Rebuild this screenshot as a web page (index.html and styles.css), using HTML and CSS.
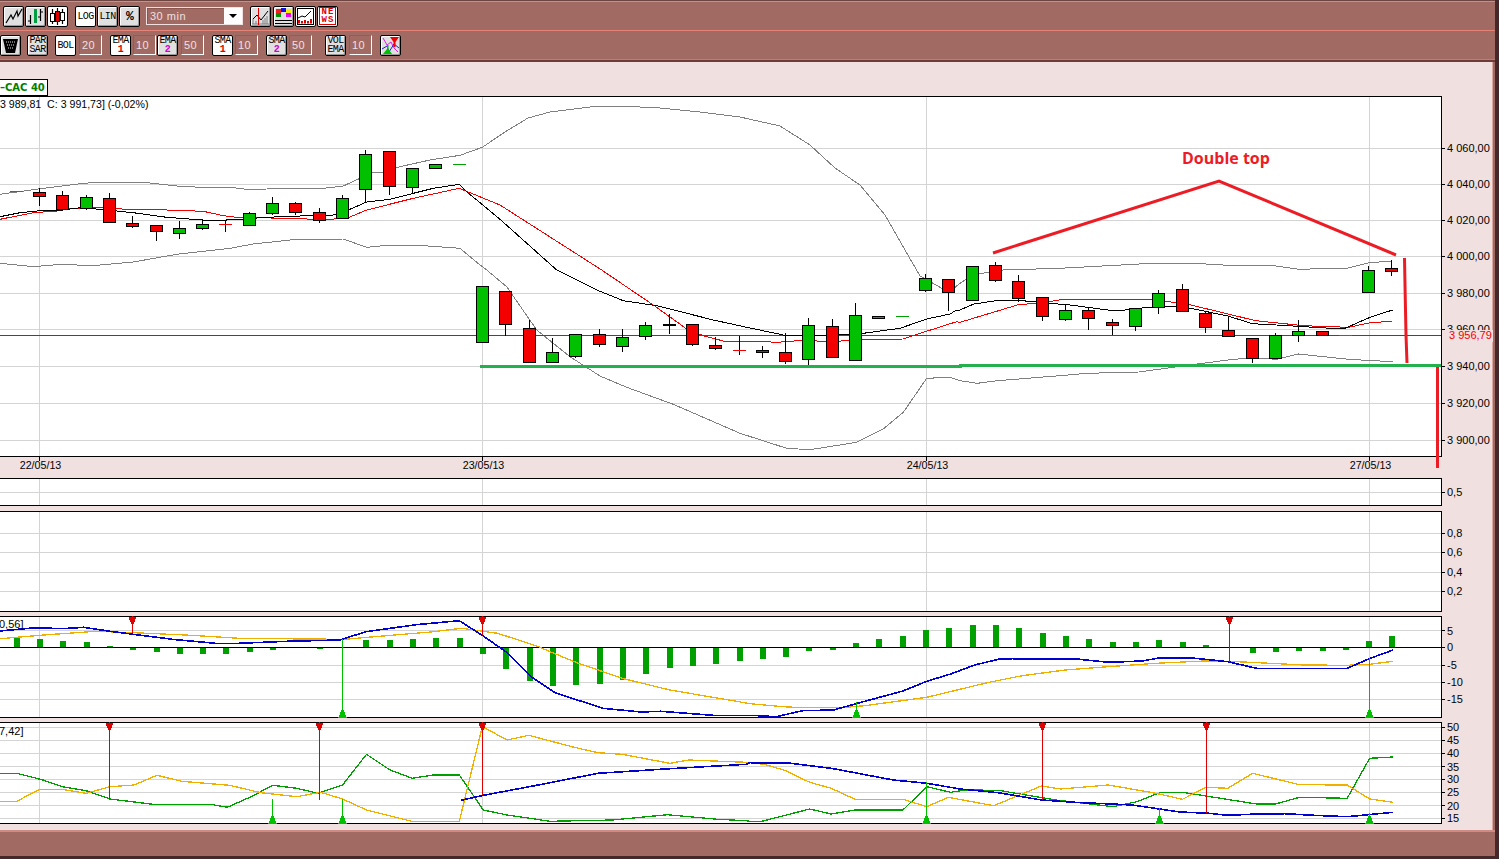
FILE: index.html
```html
<!DOCTYPE html>
<html>
	<head>
		<meta charset="utf-8">
		<title>CAC 40</title>
		<link rel="stylesheet" href="styles.css">
		<script src="chart.js"></script>
	</head>
	<body>
		<div class="app">
			<div class="topbar">
				<div class="toolrow first">
					<button class="tool ml3"><svg width="19" height="19" viewBox="0 0 19 19"><path class="ic" d="M2 16L7 8L9 12L13 4L14 9L18 2"/></svg></button>
					<button class="tool ml1"><svg width="19" height="19" viewBox="0 0 19 19"><path class="ic" d="M4.5 8V17M2 14H4.5M14.5 2V14M14.5 5H17M14.5 10H12"/><path class="ic-green" d="M9.5 2V16"/></svg></button>
					<button class="tool ml1 on"><svg width="19" height="19" viewBox="0 0 19 19"><path class="ic" d="M4.5 2V17M14.5 2V17"/><rect class="ic-body" x="2.5" y="6.5" width="4" height="8"/><rect class="ic-body" x="12.5" y="5.5" width="4" height="8"/><path class="ic" d="M9.5 1V18"/><rect class="ic-red" x="7.5" y="4.5" width="4" height="10"/></svg></button>

					<button class="tool cap ml7 on"><span>LOG</span></button>
					<button class="tool cap ml1"><span>LIN</span></button>
					<button class="tool cap ml1 big"><span>%</span></button>

					<div class="period ml6"><span class="period-text">30 min</span><span class="period-arrow"></span></div>

					<button class="tool ml7"><svg width="19" height="19" viewBox="0 0 19 19"><path class="ic-grey" d="M1 17H18M2 17V12M5 17V14M12 17V13M14 17V11M16 17V9"/><path class="ic-thin" d="M2 12L6 8L10 13L17 4"/><path class="ic-redline" d="M7.5 1V18"/></svg></button>
					<button class="tool ml2"><svg width="19" height="19" viewBox="0 0 19 19"><rect x="2" y="2" width="5" height="4" fill="#f02020"/><rect x="7" y="1" width="5" height="4" fill="#1010e0"/><rect x="12" y="2" width="5" height="4" fill="#f0f000"/><rect x="2" y="6" width="5" height="4" fill="#009000"/><rect x="12" y="6" width="5" height="4" fill="#f000f0"/><path class="ic" d="M1 13.5H18M1 16.5H18"/></svg></button>
					<button class="tool ml1 on"><svg width="19" height="19" viewBox="0 0 19 19"><rect class="ic-thin" x="1.5" y="1.5" width="16" height="16"/><path class="ic-thin" d="M2 11L6 9L9 10L15 4"/><path class="ic-redbars" d="M3 16.500V13M6 16.500V14M9 16.500V13M12 16.500V14M15 16.500V12"/></svg></button>
					<button class="tool ml1 on news"><span>NE<br>WS</span></button>
				</div>
				<div class="toolrow second">
					<button class="tool"><svg width="19" height="19" viewBox="0 0 19 19"><path d="M2 3H17L14 17H5Z" fill="#000"/><path class="ic-dots" d="M5 6H14M6 9H13M7 12H12"/></svg></button>
					<button class="tool cap two ml6"><span>PAR<br>SAR</span></button>
					<button class="tool cap ml7 on"><span>BOL</span></button>
					<span class="num ml3">20</span>
					<button class="tool cap two ml8 on"><span>EMA<br><b class="c1">1</b></span></button>
					<span class="num ml2">10</span>
					<button class="tool cap two ml1"><span>EMA<br><b class="c2">2</b></span></button>
					<span class="num ml3">50</span>
					<button class="tool cap two ml8 on"><span>SMA<br><b class="c1">1</b></span></button>
					<span class="num ml2">10</span>
					<button class="tool cap two ml8"><span>SMA<br><b class="c2">2</b></span></button>
					<span class="num ml2">50</span>
					<button class="tool cap two ml13"><span>VOL<br>EMA</span></button>
					<span class="num ml3">10</span>
					<button class="tool ml8"><svg width="19" height="19" viewBox="0 0 19 19"><path class="ic-mag" d="M2 2L6 9L10 6L13 12L17 16"/><path class="ic-blue" d="M1 13L6 10L8 16L13 8L18 12"/><path d="M9 1H18L14.500 6V11H12.500V6Z" fill="#f00000"/><path d="M6 9V13L2 18H11L7.500 13V9Z" fill="#00c000"/></svg></button>
				</div>
			</div>

			<div class="workspace">
				<div class="legend">–CAC 40</div>

				<svg class="pane" id="main" width="1493" height="382" viewBox="0 96 1493 382">
					<g class="plot"></g>
					<text class="axis info" x="0" y="108" xml:space="preserve">3 989,81  C: 3 991,73] (-0,02%)</text>
					<text class="axis" x="1447" y="152">4 060,00</text>
					<text class="axis" x="1447" y="188">4 040,00</text>
					<text class="axis" x="1447" y="224">4 020,00</text>
					<text class="axis" x="1447" y="260">4 000,00</text>
					<text class="axis" x="1447" y="297">3 980,00</text>
					<text class="axis" x="1447" y="333">3 960,00</text>
					<rect class="cover" x="1445" y="330" width="48" height="12"/>
					<text class="axis last" x="1449" y="339">3 956,79</text>
					<text class="axis" x="1447" y="370">3 940,00</text>
					<text class="axis" x="1447" y="407">3 920,00</text>
					<text class="axis" x="1447" y="444">3 900,00</text>
					<text class="axis mid" x="40.500" y="469">22/05/13</text>
					<text class="axis mid" x="483.500" y="469">23/05/13</text>
					<text class="axis mid" x="927.500" y="469">24/05/13</text>
					<text class="axis mid" x="1370.500" y="469">27/05/13</text>
					<g class="notes"></g>
					<text class="note-text" x="1182" y="164">Double top</text>
				</svg>

				<svg class="pane" id="vol" width="1493" height="32" viewBox="0 478 1493 32">
					<g class="plot"></g>
					<text class="axis" x="1447" y="496">0,5</text>
				</svg>

				<svg class="pane" id="osc" width="1493" height="106" viewBox="0 510 1493 106">
					<g class="plot"></g>
					<text class="axis" x="1447" y="537">0,8</text>
					<text class="axis" x="1447" y="556">0,6</text>
					<text class="axis" x="1447" y="576">0,4</text>
					<text class="axis" x="1447" y="595">0,2</text>
				</svg>

				<svg class="pane" id="macd" width="1493" height="106" viewBox="0 616 1493 106">
					<g class="plot"></g>
					<text class="axis" x="-1" y="628">0,56]</text>
					<text class="axis" x="1447" y="635">5</text>
					<text class="axis" x="1447" y="651">0</text>
					<text class="axis" x="1447" y="669">-5</text>
					<text class="axis" x="1447" y="686">-10</text>
					<text class="axis" x="1447" y="703">-15</text>
				</svg>

				<svg class="pane" id="dmi" width="1493" height="103" viewBox="0 722 1493 103">
					<g class="plot"></g>
					<text class="axis" x="-1" y="735">7,42]</text>
					<text class="axis" x="1447" y="731">50</text>
					<text class="axis" x="1447" y="744">45</text>
					<text class="axis" x="1447" y="757">40</text>
					<text class="axis" x="1447" y="771">35</text>
					<text class="axis" x="1447" y="783">30</text>
					<text class="axis" x="1447" y="796">25</text>
					<text class="axis" x="1447" y="810">20</text>
					<text class="axis" x="1447" y="822">15</text>
				</svg>
			</div>

			<div class="statusbar"></div>
		</div>
	</body>
</html>
```

FILE: styles.css
```css
html, body {
	margin: 0;
	height: 100%;
	overflow: hidden;
}

.app {
	width: 1495px;
	height: 859px;
	display: flex;
	flex-direction: column;
	background-color: #a16a63;
	border-right: 4px solid #44282a;
}

.topbar {
	height: 62px;
	box-sizing: border-box;
	border-top: 1px solid #6e4540;
	border-bottom: 2px solid #703c3a;
}

.toolrow {
	display: flex;
	align-items: center;
	box-sizing: border-box;
}

.toolrow.first {
	height: 30px;
	border-top: 1px solid #cf8d85;
	border-bottom: 1px solid #e68378;
}

.toolrow.second {
	height: 29px;
	border-bottom: 1px solid #c27c74;
}

.ml1 { margin-left: 1px; }
.ml2 { margin-left: 2px; }
.ml3 { margin-left: 3px; }
.ml6 { margin-left: 6px; }
.ml7 { margin-left: 7px; }
.ml8 { margin-left: 8px; }
.ml13 { margin-left: 13px; }

.tool {
	width: 21px;
	height: 21px;
	padding: 0;
	flex: none;
	display: flex;
	align-items: center;
	justify-content: center;
	background-color: #e0e0e0;
	border: 1px solid #000;
	border-radius: 2px;
	box-shadow: inset 1px 1px 0 #fff, inset -1px -1px 0 #9a9a9a;
	color: #000;
}

.tool.on {
	background-color: #fff;
	box-shadow: none;
}

.tool svg {
	display: block;
}

.cap {
	font: 10px/9px "Liberation Mono", monospace;
	letter-spacing: -0.6px;
	text-align: center;
}

.cap.big {
	font-size: 13px;
	font-weight: bold;
}

.cap b {
	font-size: 10px;
}

.c1 { color: #e00000; }
.c2 { color: #d000d0; }

.news {
	font: bold 9px/8px "Liberation Mono", monospace;
	color: #e00000;
}

.news span {
	border: 1px solid #e00000;
	padding: 0 0 0 1px;
	letter-spacing: 1.2px;
}

.num {
	width: 23px;
	height: 20px;
	box-sizing: border-box;
	flex: none;
	padding-left: 2px;
	border: 1px solid;
	border-color: #6c6c6c #fff #fff #6c6c6c;
	font: 11px/18px "Liberation Sans", sans-serif;
	letter-spacing: 0.5px;
	color: #f0e0e0;
}

.period {
	width: 97px;
	height: 18px;
	box-sizing: border-box;
	flex: none;
	display: flex;
	border: 1px solid #f0e0e0;
	box-shadow: inset 1px 1px 0 #8a5650;
}

.period-text {
	flex: 1;
	padding-left: 3px;
	font: 11px/16px "Liberation Sans", sans-serif;
	letter-spacing: 0.5px;
	color: #f0e0e0;
}

.period-arrow {
	width: 18px;
	background: #fff;
	position: relative;
}

.period-arrow::after {
	content: "";
	position: absolute;
	left: 5px;
	top: 6px;
	border-left: 4px solid transparent;
	border-right: 4px solid transparent;
	border-top: 4px solid #000;
}

.ic, .ic-thin, .ic-green, .ic-grey, .ic-redline, .ic-redbars, .ic-dots, .ic-mag, .ic-blue {
	fill: none;
	stroke-width: 1;
}

.ic { stroke: #000; stroke-width: 1.2; }
.ic-thin { stroke: #000; }
.ic-green { stroke: #00a040; stroke-width: 3; }
.ic-grey { stroke: #808080; }
.ic-redline { stroke: #e00000; }
.ic-redbars { stroke: #e00000; stroke-width: 2; }
.ic-dots { stroke: #e0e0e0; stroke-dasharray: 1 1; }
.ic-mag { stroke: #e020e0; }
.ic-blue { stroke: #2020d0; }
.ic-body { fill: #fff; stroke: #000; }
.ic-red { fill: #e00000; stroke: #000; }

.workspace {
	flex: 1;
	padding-top: 17px;
	background-color: #f0e0e0;
	border-right: 2px solid #a16a63;
	box-shadow: inset -1px 0 0 #d9a8a0;
}

.legend {
	width: 48px;
	height: 17px;
	box-sizing: border-box;
	background: #fff;
	border: 1px solid #000;
	border-left: none;
	font: bold 10px/15px "DejaVu Sans", sans-serif;
	color: #008000;
	white-space: nowrap;
}

.pane {
	display: block;
}

.statusbar {
	height: 29px;
	box-sizing: border-box;
	border-top: 2px solid #d08c84;
	border-bottom: 3px solid #44282a;
}

.axis {
	font: 11px "Liberation Sans", sans-serif;
	fill: #000;
}

.axis.info { font-size: 10.6px; }
.axis.mid { text-anchor: middle; font-size: 10.7px; }
.axis.last { fill: #f00000; }

.cover { fill: #f0e0e0; }

.note-text {
	font: bold 16px "Open Sans", sans-serif;
	fill: #ed1c24;
}

.bg { fill: #fff; }
.frame { fill: none; stroke: #000; }
.grid { stroke: #d4d4d4; shape-rendering: crispEdges; }
.tick { stroke: #000; shape-rendering: crispEdges; }
.zero { stroke: #000; shape-rendering: crispEdges; }
.last-line { stroke: #f00000; shape-rendering: crispEdges; }

.wick { stroke: #000; shape-rendering: crispEdges; }
.up { fill: #00c000; stroke: #000; shape-rendering: crispEdges; }
.down { fill: #f40000; stroke: #000; shape-rendering: crispEdges; }
.flat-k { fill: #000; stroke: #000; shape-rendering: crispEdges; }
.dash-up { stroke: #00a000; shape-rendering: crispEdges; }
.dash-down { stroke: #f40000; shape-rendering: crispEdges; }

.bar { fill: #00a000; shape-rendering: crispEdges; }

.line { fill: none; shape-rendering: crispEdges; }
.boll { stroke: #808080; }
.ema-a { stroke: #000; }
.ema-b { stroke: #f00000; }
.blue { stroke: #0000d0; stroke-width: 1.6; }
.orange { stroke: #f0b000; stroke-width: 1.3; }
.green { stroke: #00a000; stroke-width: 1.3; }

.sig-r { stroke: #e00000; fill: #e00000; shape-rendering: crispEdges; }
.sig-g { stroke: #00c000; fill: #00c000; shape-rendering: crispEdges; }

.note-red { fill: none; stroke: #ed1c24; stroke-width: 3; }
.note-green { fill: none; stroke: #22b14c; stroke-width: 3; shape-rendering: crispEdges; }
```

FILE: chart.js
```js
var NS = "http://www.w3.org/2000/svg";
var VLINES = [39, 482, 926, 1369];

function add(parent, tag, cls, attrs) {
	var e = document.createElementNS(NS, tag);
	e.setAttribute("class", cls);
	for (var k in attrs) e.setAttribute(k, attrs[k]);
	parent.appendChild(e);
	return e;
}

// flat list of x,y read off the picture -> points string
function seg(x0, y0, sx, sy, pts) {
	var out = [];
	for (var i = 0; i < pts.length; i += 2) {
		out.push((x0 + pts[i] / sx).toFixed(1) + "," + (y0 + pts[i + 1] / sy).toFixed(1));
	}
	return out.join(" ");
}

function line(g, cls, points) {
	add(g, "polyline", "line " + cls, { points: points });
}

function candleX(i) {
	return Math.floor(39.4 + 23.32 * i);
}

function hline(g, cls, y, x1, x2) {
	add(g, "line", cls, { x1: x1, x2: x2, y1: y + 0.5, y2: y + 0.5 });
}

// white plot area, grid, ticks and frame
function pane(id, top, bottom, ys, ticks) {
	var g = document.querySelector("#" + id + " .plot");
	add(g, "rect", "bg", { x: 0, y: top, width: 1441, height: bottom - top });
	for (var i = 0; i < VLINES.length; i++) {
		add(g, "line", "grid", { x1: VLINES[i] + 0.5, x2: VLINES[i] + 0.5, y1: top, y2: bottom });
	}
	for (var j = 0; j < ys.length; j++) {
		hline(g, "grid", ys[j], 0, 1441);
	}
	var tk = ticks || ys;
	for (var n = 0; n < tk.length; n++) {
		hline(g, "tick", tk[n], 1441, 1445);
	}
	add(g, "path", "frame", { d: "M0 " + (top + 0.5) + "H1441.5V" + (bottom + 0.5) + "H0", "shape-rendering": "crispEdges" });
	return g;
}

function signal(g, type, x, y, top, bottom) {
	if (type == "r") {
		add(g, "line", "sig-r", { x1: x + 0.5, x2: x + 0.5, y1: top, y2: y });
		add(g, "path", "sig-r", { d: "M" + (x - 3) + " " + (top + 1) + "H" + (x + 4) + "L" + (x + 1.5) + " " + (top + 7) + "H" + (x - 0.5) + "Z" });
	} else {
		add(g, "line", "sig-g", { x1: x + 0.5, x2: x + 0.5, y1: y, y2: bottom });
		add(g, "path", "sig-g", { d: "M" + (x - 3) + " " + bottom + "H" + (x + 4) + "L" + (x + 1) + " " + (bottom - 7) + "H" + x + "Z" });
	}
}

// [index, colour, high, top, bottom, low]
var CANDLES = [
	[-1, "g", 0, 191, 191, 0],
	[0, "r", 188, 192, 196, 206], [1, "r", 191, 195, 209, 211], [2, "g", 195, 197, 208, 210],
	[3, "r", 193, 198, 222, 222], [4, "r", 216, 223, 226, 228], [5, "r", 225, 225, 231, 241],
	[6, "g", 221, 228, 233, 239], [7, "g", 219, 224, 228, 230], [8, "r", 220, 224, 224, 232],
	[9, "g", 212, 213, 225, 226], [10, "g", 197, 203, 213, 215], [11, "r", 202, 203, 212, 215],
	[12, "r", 208, 212, 220, 223], [13, "g", 195, 198, 218, 218], [14, "g", 150, 154, 189, 202],
	[15, "r", 151, 151, 186, 195], [16, "g", 168, 168, 187, 194], [17, "g", 164, 164, 168, 168],
	[18, "g", 0, 164, 164, 0], [19, "g", 286, 286, 342, 342], [20, "r", 291, 291, 324, 336],
	[21, "r", 320, 328, 362, 362], [22, "g", 338, 352, 362, 362], [23, "g", 334, 334, 356, 358],
	[24, "r", 329, 334, 344, 347], [25, "g", 329, 337, 346, 352], [26, "g", 322, 325, 336, 340],
	[27, "k", 314, 324, 325, 334], [28, "r", 324, 324, 344, 346], [29, "r", 337, 345, 348, 350],
	[30, "r", 336, 350, 350, 355], [31, "r", 346, 350, 352, 358], [32, "r", 333, 352, 361, 364],
	[33, "g", 318, 325, 359, 365], [34, "r", 319, 326, 357, 357], [35, "g", 303, 315, 360, 360],
	[36, "g", 316, 316, 318, 318], [37, "g", 0, 316, 316, 0], [38, "g", 274, 278, 290, 292],
	[39, "r", 279, 279, 292, 311], [40, "g", 266, 266, 300, 300], [41, "r", 262, 265, 280, 282],
	[42, "r", 275, 281, 298, 302], [43, "r", 297, 297, 316, 321], [44, "g", 305, 310, 319, 321],
	[45, "r", 308, 310, 318, 330], [46, "r", 319, 322, 325, 335], [47, "g", 308, 308, 326, 331],
	[48, "g", 290, 293, 307, 314], [49, "r", 284, 289, 311, 311], [50, "r", 312, 313, 327, 333],
	[51, "r", 317, 330, 336, 336], [52, "r", 338, 338, 358, 363], [53, "g", 333, 335, 358, 358],
	[54, "g", 320, 331, 335, 342], [55, "r", 331, 331, 335, 335], [56, "g", 0, 335, 335, 0],
	[57, "g", 266, 270, 292, 292], [58, "r", 260, 268, 271, 276]
];

// macd histogram, height in px from index -1, positive goes up
var HIST = [9.7, 8.3, 6.3, 5.3, 1.3, -1.7, -3.7, -5.7, -5.7, -5.7, -3.7, -1.7, 0, -1.3, 0, 7.3, 7.3, 8.3, 9.3, 9.3,
	-5.7, -20.7, -32.7, -37.7, -36.7, -35.7, -31.7, -25.7, -19.7, -17.7, -15.7, -12.7, -10.7, -8.7, -2.7, -1.7,
	4.3, 8.3, 11.3, 17.3, 19.3, 22.3, 22.3, 19.3, 14.3, 11.3, 8.3, 5.3, 5.3, 7.3, 5.3, 2.3, 0,
	-4.7, -3.7, -2.7, -2.7, -1.7, 6.3, 11.3];

function drawMain() {
	var g = pane("main", 96, 456, [148, 184, 220, 256, 293, 329, 366, 403, 440]);
	for (var v = 0; v < VLINES.length; v++) {
		add(g, "line", "tick", { x1: VLINES[v] + 0.5, x2: VLINES[v] + 0.5, y1: 456, y2: 461 });
	}

	line(g, "boll", seg(0, 130, 3, 3, [0,193, 130,175, 250,160, 300,157, 430,157, 530,168, 600,172, 690,172, 740,178, 800,177, 970,175, 1030,168, 1080,145, 1100,127, 1150,127, 1200,110, 1290,90, 1380,76, 1447,52])
		+ " " + seg(0, 0, 1, 1, [505,132, 528,118, 550,112, 590,107, 620,106, 660,108, 700,112, 740,117, 780,126, 810,145, 835,168, 860,185, 885,215, 905,250, 920,276, 943,289, 953,289])
		+ " " + seg(960, 230, 2.909, 3, [0,160, 36,135, 124,120, 290,115, 560,100, 680,100, 800,107, 920,108, 985,118, 1130,114, 1190,98, 1258,93]));
	line(g, "boll", seg(0, 130, 3, 3, [0,400, 100,410, 170,404, 290,406, 400,396, 530,373, 690,355, 760,342, 870,330, 1030,327, 1100,352, 1150,347, 1270,347, 1380,355, 1440,405])
		+ " " + seg(480, 270, 3, 3, [20,0, 80,50, 170,180, 270,260, 360,318, 440,352, 580,403, 780,490, 920,535, 990,539, 1130,517, 1210,477, 1270,427, 1340,325, 1410,322])
		+ " " + seg(960, 230, 2.909, 3, [0,452, 50,460, 110,452, 290,437, 370,430, 520,426, 690,402, 780,390, 850,383, 920,388, 985,372, 1130,388, 1258,395]));

	hline(g, "last-line", 335, 0, 1441);

	line(g, "ema-b", seg(0, 130, 3, 3, [0,268, 100,248, 170,243, 220,235, 300,233, 380,238, 500,240, 610,244, 670,257, 720,263, 900,265, 950,270, 1040,265, 1100,240, 1240,205, 1378,175, 1500,225])
		+ " " + seg(480, 270, 3, 3, [365,0, 520,105, 620,177, 670,197, 730,213, 810,213, 890,217, 980,210, 1040,216, 1160,208, 1270,207, 1330,187, 1430,155])
		+ " " + seg(960, 230, 2.909, 3, [0,277, 170,224, 240,218, 300,208, 460,210, 550,208, 660,222, 780,252, 860,272, 1000,287, 1130,292, 1190,279, 1258,273]));
	line(g, "ema-a", seg(0, 130, 3, 3, [0,260, 60,248, 120,242, 190,240, 240,233, 300,238, 400,248, 500,262, 580,268, 640,272, 720,268, 800,262, 900,258, 1000,255, 1045,240, 1100,216, 1170,208, 1240,190, 1300,175, 1378,163, 1400,185, 1500,268])
		+ " " + seg(480, 270, 3, 3, [230,0, 350,60, 430,92, 530,107, 700,150, 800,172, 920,197, 1000,197, 1150,190, 1260,175, 1340,147, 1410,132, 1430,120])
		+ " " + seg(960, 230, 2.909, 3, [0,240, 40,222, 100,213, 170,211, 240,218, 320,225, 430,240, 480,240, 520,235, 600,228, 670,235, 780,258, 850,281, 920,285, 1000,290, 1115,297, 1190,263, 1258,240]));

	for (var i = 0; i < CANDLES.length; i++) {
		var c = CANDLES[i], x = candleX(c[0]);
		if (c[2]) add(g, "line", "wick", { x1: x + 0.5, x2: x + 0.5, y1: c[2], y2: c[5] });
		if (c[3] == c[4]) {
			hline(g, c[1] == "g" ? "dash-up" : "dash-down", c[3], x - 6, x + 7);
		} else {
			var cls = c[1] == "g" ? "up" : (c[1] == "r" ? "down" : "flat-k");
			add(g, "rect", cls, { x: x - 5.5, y: c[3] + 0.5, width: 12, height: c[4] - c[3] });
		}
	}

	var n = document.querySelector("#main .notes");
	add(n, "polyline", "note-red", { points: "993,253 1219,181 1396,255" });
	add(n, "polyline", "note-red", { points: "1404.5,258 1405,285 1406,335 1407,363" });
	add(n, "polyline", "note-red", { points: "1437.500,366 1437.500,468" });
	add(n, "path", "note-green", { d: "M480 366.500H960V365.500H1441" });
}

function drawMacd() {
	var top = 616, bottom = 717;
	var g = pane("macd", top, bottom, [630, 665, 682, 699], [630, 647, 665, 682, 699]);
	for (var i = 0; i < HIST.length; i++) {
		var h = HIST[i], x = candleX(i - 1);
		if (h == 0) continue;
		add(g, "rect", "bar", { x: x - 2.5, y: h > 0 ? 647 - h : 648, width: 6, height: Math.abs(h) });
	}
	hline(g, "zero", 647, 0, 1441);

	line(g, "orange", seg(0, 610, 2.09, 3, [0,86, 100,74, 200,64, 280,68, 400,76, 500,85, 640,87, 720,88, 800,78, 900,66, 965,55, 1040,70, 1120,107, 1200,155, 1300,205, 1400,240, 1560,279])
		+ " " + seg(750, 610, 2.093, 3, [0,281, 70,290, 110,293, 190,293, 240,287, 370,262, 500,217, 570,197, 660,180, 750,170, 850,160, 950,153, 1020,155, 1160,165, 1250,166, 1297,163, 1346,154]));
	line(g, "blue", seg(0, 610, 2.09, 3, [0,63, 75,53, 130,56, 175,52, 230,64, 290,75, 360,88, 450,100, 500,100, 600,94, 710,90, 765,65, 870,44, 960,32, 1010,78, 1060,128, 1110,200, 1160,248, 1260,295, 1340,306, 1380,304, 1490,316, 1560,316])
		+ " " + seg(750, 610, 2.093, 3, [0,316, 55,320, 110,302, 175,300, 225,280, 320,243, 370,214, 420,192, 470,165, 520,148, 550,146, 690,148, 750,157, 820,153, 860,143, 920,143, 1000,155, 1060,175, 1250,175, 1298,145, 1346,120]));

	signal(g, "r", 132, 633, top, bottom);
	signal(g, "r", 482, 635, top, bottom);
	signal(g, "r", 1229, 662, top, bottom);
	signal(g, "g", 342, 639, top, bottom);
	signal(g, "g", 856, 702, top, bottom);
	signal(g, "g", 1369, 658, top, bottom);
}

function drawDmi() {
	var top = 722, bottom = 823;
	var g = pane("dmi", top, bottom, [727, 740, 753, 766, 779, 792, 805, 818]);

	line(g, "green", seg(0, 610, 2.09, 3, [0,490, 35,490, 90,510, 130,530, 180,542, 230,567, 320,583, 440,583, 475,592, 525,560, 570,526, 620,535, 665,550, 716,525, 766,433, 815,480, 862,505, 905,495, 960,495, 1010,600, 1060,615, 1150,634, 1280,630, 1395,614, 1500,628, 1560,632])
		+ " " + seg(750, 610, 2.093, 3, [0,634, 25,634, 125,597, 170,612, 220,600, 320,600, 370,530, 420,547, 450,540, 520,541, 640,570, 760,590, 810,575, 860,547, 905,547, 1060,582, 1100,582, 1150,562, 1250,565, 1297,445, 1346,441]));
	line(g, "orange", seg(0, 610, 2.09, 3, [0,574, 35,574, 83,538, 130,538, 180,550, 230,530, 280,525, 328,496, 380,514, 480,526, 545,548, 620,560, 670,547, 716,567, 766,600, 860,634, 960,634, 1008,350, 1060,390, 1105,376, 1200,412, 1250,428, 1300,433, 1400,460, 1440,450, 1560,457])
		+ " " + seg(750, 610, 2.093, 3, [0,458, 30,463, 75,482, 125,517, 170,535, 220,568, 320,568, 370,590, 415,562, 510,587, 610,528, 650,537, 750,525, 850,550, 905,568, 955,532, 1000,535, 1052,490, 1150,524, 1250,525, 1297,567, 1346,577]));
	line(g, "blue", seg(0, 610, 2.09, 3, [963,571, 1010,556, 1100,532, 1250,490, 1400,476, 1560,463])
		+ " " + seg(750, 610, 2.093, 3, [0,458, 85,460, 170,475, 300,510, 370,520, 440,537, 520,548, 610,570, 680,577, 800,585, 900,606, 960,610, 1000,616, 1060,612, 1120,611, 1180,616, 1250,620, 1346,607]));

	signal(g, "r", 109, 799, top, bottom);
	signal(g, "r", 319, 800, top, bottom);
	signal(g, "r", 482, 795, top, bottom);
	signal(g, "r", 1042, 800, top, bottom);
	signal(g, "r", 1206, 813, top, bottom);
	signal(g, "g", 272, 799, top, bottom);
	signal(g, "g", 342, 799, top, bottom);
	signal(g, "g", 926, 782, top, bottom);
	signal(g, "g", 1159, 808, top, bottom);
	signal(g, "g", 1369, 813, top, bottom);
}

window.onload = function() {
	drawMain();
	pane("vol", 478, 505, [492]);
	pane("osc", 511, 611, [533, 552, 572, 591]);
	drawMacd();
	drawDmi();
};
```
